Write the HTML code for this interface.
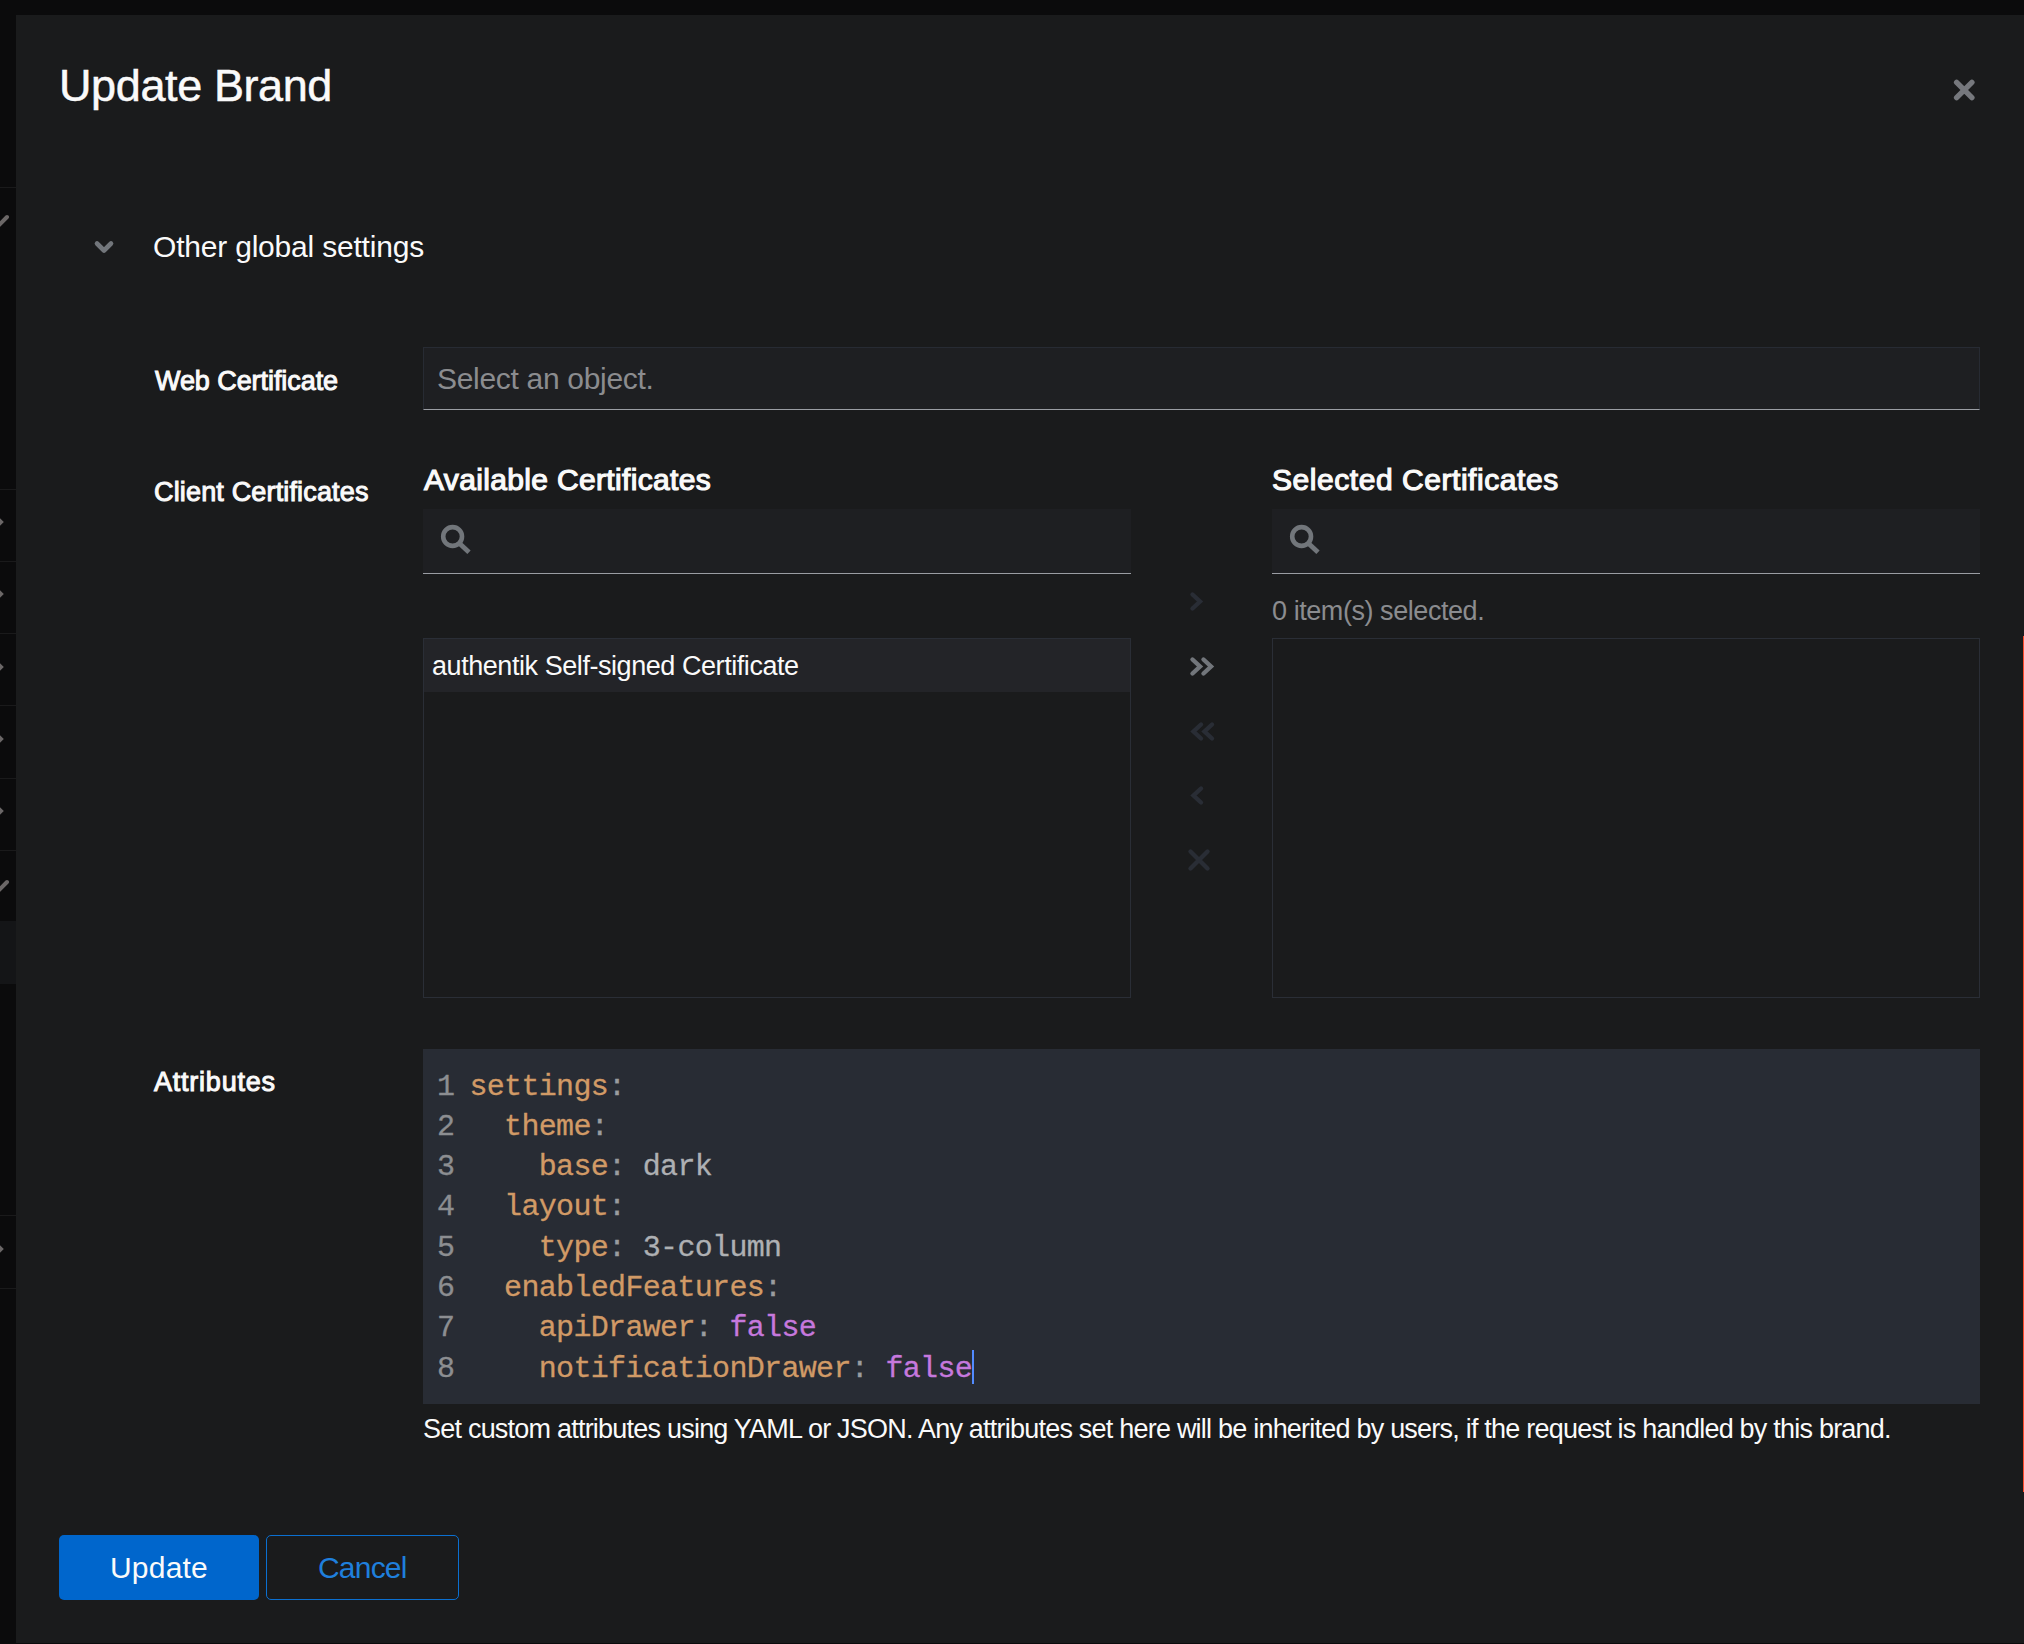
<!DOCTYPE html>
<html><head><meta charset="utf-8">
<style>
html,body{margin:0;padding:0;}
body{width:2024px;height:1644px;background:#0b0b0c;position:relative;overflow:hidden;font-family:"Liberation Sans",sans-serif;color:#fafafa;}
.a{position:absolute;white-space:nowrap;}
#modal{position:absolute;left:16px;top:15px;width:2008px;height:1628px;background:#1a1b1c;}
.title{left:59px;top:58px;font-size:45px;line-height:56px;letter-spacing:-0.39px;-webkit-text-stroke:0.5px #fafafa;}
.lbl{font-size:27px;font-weight:normal;line-height:34px;-webkit-text-stroke:1.0px #fafafa;}
.input{background:#1e1f22;box-sizing:border-box;}
.ph{font-size:30px;color:#8b8c8f;line-height:40px;}
.h2{font-size:30px;font-weight:normal;line-height:40px;-webkit-text-stroke:1.2px #fafafa;}
.listbox{border:1px solid #2a2e36;box-sizing:border-box;}
.code{background:#282c34;}
.cl{position:absolute;font-family:"Liberation Mono",monospace;font-size:30px;line-height:40.29px;letter-spacing:-0.67px;white-space:pre;-webkit-text-stroke:0.3px currentColor;}
.ln{color:#8c8e91;}
.k{color:#d19a66;}
.p{color:#9a9c9f;}
.v{color:#aeb0b3;}
.f{color:#c678dd;}
</style></head><body>
<svg class="a" style="left:0;top:0" width="16" height="1644" viewBox="0 0 16 1644">
<g fill="#1a1a1b"><rect x="0" y="187" width="16" height="1"/><rect x="0" y="489" width="16" height="1"/><rect x="0" y="561" width="16" height="1"/><rect x="0" y="633" width="16" height="1"/><rect x="0" y="705" width="16" height="1"/><rect x="0" y="778" width="16" height="1"/><rect x="0" y="850" width="16" height="1"/><rect x="0" y="1215" width="16" height="1"/><rect x="0" y="1288" width="16" height="1"/></g>
<rect x="0" y="921" width="16" height="63" fill="#141517"/>
<g stroke="#6b6767" stroke-width="4" stroke-linecap="round" fill="none"><path d="M-3 518L1 522L-3 526"/><path d="M-3 590L1 594L-3 598"/><path d="M-3 663L1 667L-3 671"/><path d="M-3 735L1 739L-3 743"/><path d="M-3 807L1 811L-3 815"/><path d="M-3 1245L1 1249L-3 1253"/><path d="M-1 225L7 217"/><path d="M-1 890L7 882"/></g>
</svg>
<div id="modal"></div>
<div class="a" style="left:2023px;top:636px;width:1px;height:856px;background:#fd4b2d;"></div>
<div class="a title">Update Brand</div>
<!-- close -->
<svg class="a" style="left:1952px;top:78px" width="24" height="24" viewBox="0 0 24 24"><path d="M4.6 4.3L19.9 19.6M19.9 4.3L4.6 19.6" stroke="#76787d" stroke-width="5.4" stroke-linecap="round"/></svg>
<!-- chevron -->
<svg class="a" style="left:93px;top:239px" width="22" height="17" viewBox="0 0 22 17"><path d="M4 4.5L11 11.5L18 4.5" stroke="#72767b" stroke-width="4.6" stroke-linecap="round" stroke-linejoin="round" fill="none"/></svg>
<div class="a" style="left:153px;top:227px;font-size:30px;line-height:40px;letter-spacing:-0.2px;">Other global settings</div>

<div class="a lbl" style="left:155px;top:364px;letter-spacing:-0.07px;">Web Certificate</div>
<div class="a input" style="left:423px;top:347px;width:1557px;height:63px;border-top:1px solid #272b33;border-left:1px solid #272b33;border-right:1px solid #272b33;border-bottom:1px solid #9a9da3;"></div>
<div class="a ph" style="left:437px;top:359px;letter-spacing:-0.31px;">Select an object.</div>

<div class="a lbl" style="left:154px;top:475px;letter-spacing:0.16px;">Client Certificates</div>
<div class="a h2" style="left:424px;top:460px;letter-spacing:0.34px;">Available Certificates</div>
<div class="a h2" style="left:1272px;top:460px;letter-spacing:0.55px;">Selected Certificates</div>
<div class="a input" style="left:423px;top:509px;width:708px;height:65px;border-bottom:1px solid #9a9da3;"></div>
<div class="a input" style="left:1272px;top:509px;width:708px;height:65px;border-bottom:1px solid #9a9da3;"></div>
<svg class="a" style="left:438px;top:522px" width="36" height="36" viewBox="0 0 36 36"><circle cx="14.6" cy="14.5" r="9.4" stroke="#72767b" stroke-width="4.6" fill="none"/><path d="M21 21L31 30.3" stroke="#72767b" stroke-width="4.8" stroke-linecap="butt"/></svg>
<svg class="a" style="left:1287px;top:522px" width="36" height="36" viewBox="0 0 36 36"><circle cx="14.6" cy="14.5" r="9.4" stroke="#72767b" stroke-width="4.6" fill="none"/><path d="M21 21L31 30.3" stroke="#72767b" stroke-width="4.8" stroke-linecap="butt"/></svg>
<div class="a" style="left:1272px;top:594px;font-size:27px;color:#8b8c8f;line-height:34px;letter-spacing:-0.44px;">0 item(s) selected.</div>
<div class="a listbox" style="left:423px;top:638px;width:708px;height:360px;"></div>
<div class="a listbox" style="left:1272px;top:638px;width:708px;height:360px;"></div>
<div class="a" style="left:424px;top:639px;width:706px;height:53px;background:#232428;"></div>
<div class="a" style="left:432px;top:649px;font-size:27px;line-height:34px;letter-spacing:-0.44px;">authentik Self-signed Certificate</div>

<!-- dual list controls -->
<svg class="a" style="left:1186px;top:589px" width="20" height="24" viewBox="0 0 20 24"><path d="M6.5 5.5L14 12.5L6.5 19.5" stroke="#292d35" stroke-width="4.4" stroke-linecap="round" stroke-linejoin="miter" fill="none"/></svg>
<svg class="a" style="left:1186px;top:654px" width="32" height="24" viewBox="0 0 32 24"><path d="M6.5 5.5L14 12.5L6.5 19.5M17.5 5.5L25 12.5L17.5 19.5" stroke="#72767b" stroke-width="4.4" stroke-linecap="round" stroke-linejoin="miter" fill="none"/></svg>
<svg class="a" style="left:1187px;top:719px" width="32" height="24" viewBox="0 0 32 24"><path d="M14 5.5L6.5 12.5L14 19.5M25 5.5L17.5 12.5L25 19.5" stroke="#292d35" stroke-width="4.4" stroke-linecap="round" stroke-linejoin="miter" fill="none"/></svg>
<svg class="a" style="left:1187px;top:783px" width="20" height="24" viewBox="0 0 20 24"><path d="M14 5.5L6.5 12.5L14 19.5" stroke="#292d35" stroke-width="4.4" stroke-linecap="round" stroke-linejoin="miter" fill="none"/></svg>
<svg class="a" style="left:1187px;top:848px" width="24" height="24" viewBox="0 0 24 24"><path d="M3.5 3.5L20.5 20.5M20.5 3.5L3.5 20.5" stroke="#292d35" stroke-width="4.4" stroke-linecap="round"/></svg>

<div class="a lbl" style="left:154px;top:1065px;letter-spacing:0.77px;">Attributes</div>
<div class="a code" style="left:423px;top:1049px;width:1557px;height:355px;">
<div class="cl ln" style="left:14px;top:17.5px;">1
2
3
4
5
6
7
8</div>
<div class="cl" style="left:46.4px;top:17.5px;"><span class="k">settings</span><span class="p">:</span>
  <span class="k">theme</span><span class="p">:</span>
    <span class="k">base</span><span class="p">:</span> <span class="v">dark</span>
  <span class="k">layout</span><span class="p">:</span>
    <span class="k">type</span><span class="p">:</span> <span class="v">3-column</span>
  <span class="k">enabledFeatures</span><span class="p">:</span>
    <span class="k">apiDrawer</span><span class="p">:</span> <span class="f">false</span>
    <span class="k">notificationDrawer</span><span class="p">:</span> <span class="f">false</span></div>
<div class="a" style="left:549px;top:301px;width:2px;height:34px;background:#528bff;"></div>
</div>

<div class="a" style="left:423px;top:1412px;font-size:27px;line-height:34px;letter-spacing:-0.78px;">Set custom attributes using YAML or JSON. Any attributes set here will be inherited by users, if the request is handled by this brand.</div>

<div class="a" style="left:59px;top:1535px;width:200px;height:65px;background:#0066cc;border-radius:5px;"></div>
<div class="a" style="left:110px;top:1548px;font-size:30px;line-height:40px;letter-spacing:0.2px;">Update</div>
<div class="a" style="left:266px;top:1535px;width:193px;height:65px;border:1px solid #0b6fd0;border-radius:5px;box-sizing:border-box;"></div>
<div class="a" style="left:318px;top:1548px;font-size:30px;line-height:40px;color:#1f7fdc;letter-spacing:-0.8px;">Cancel</div>
</body></html>
